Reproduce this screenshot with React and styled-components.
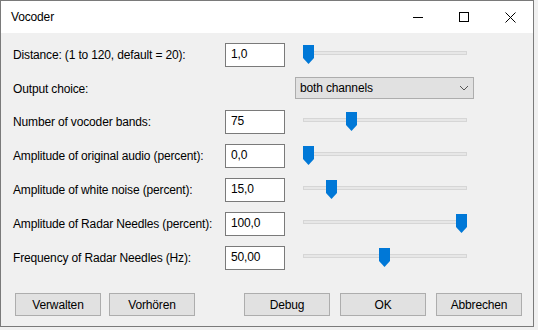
import React from "react";
import styled, { createGlobalStyle } from "styled-components";

const Global = createGlobalStyle`
  html, body { margin: 0; padding: 0; background: #f0f0f0; }
  body { font-family: "Liberation Sans", Arial, sans-serif; font-size: 12px; color: #000; letter-spacing: -0.15px; }
  * { box-sizing: border-box; }
`;

const Window = styled.div`
  width: 534px;
  height: 327px;
  border: 1px solid #7a7a7a;
  background: #f0f0f0;
  display: flex;
  flex-direction: column;
`;

const TitleBar = styled.div`
  height: 32px;
  background: #fff;
  display: flex;
  align-items: center;
  flex-shrink: 0;
`;

const Title = styled.div`
  flex: 1;
  padding-left: 10px;
  font-size: 12px;
`;

const CaptionButton = styled.div`
  width: 46px;
  height: 32px;
  display: flex;
  align-items: center;
  justify-content: center;
`;

const Content = styled.div`
  flex: 1;
  padding: 10px 11px 10px 12px;
  display: flex;
  flex-direction: column;
`;

const Grid = styled.div`
  display: grid;
  grid-template-columns: 202px 60px 179px;
  grid-template-rows: 24px 23px 24px 24px 24px 24px 24px;
  column-gap: 10px;
  row-gap: 10px;
`;

const Label = styled.div`
  align-self: center;
  white-space: nowrap;
`;

const Field = styled.input`
  width: 60px;
  height: 24px;
  border: 1px solid #7a7a7a;
  background: #fff;
  padding: 2px 5px 4px 5px;
  line-height: 16px;
  font: inherit;
  letter-spacing: inherit;
  color: #000;
  outline: none;
`;

const SliderBox = styled.div`
  position: relative;
  height: 24px;
`;

const Track = styled.div`
  position: absolute;
  left: 8px;
  right: 7px;
  top: 8px;
  height: 4px;
  background: #e7e7e7;
  border: 1px solid #d6d6d6;
`;

const Thumb = styled.svg`
  position: absolute;
  top: 2px;
  width: 11px;
  height: 19px;
  display: block;
`;

const Select = styled.div`
  grid-column: 3;
  align-self: start;
  height: 22px;
  background: #e1e1e1;
  border: 1px solid #adadad;
  display: flex;
  align-items: center;
  justify-content: space-between;
  padding: 0 4px 0 4px;
`;

const Buttons = styled.div`
  margin-top: 23px;
  display: flex;
  justify-content: space-between;
  padding-left: 2px;
`;

const Group = styled.div`
  display: flex;
  gap: ${(p) => p.$gap}px;
`;

const Button = styled.div`
  width: 86px;
  height: 23px;
  background: #e1e1e1;
  border: 1px solid #adadad;
  display: flex;
  align-items: center;
  justify-content: center;
`;

const Slider = ({ frac }) => (
  <SliderBox>
    <Track />
    <Thumb viewBox="0 0 11 19" style={{ left: 8 + Math.round(frac * 153) }}>
      <polygon points="0,0 11,0 11,13 5.5,19 0,13" fill="#0078d7" />
    </Thumb>
  </SliderBox>
);

const rows = [
  { label: "Distance: (1 to 120, default = 20):", value: "1,0", frac: 0 },
  { label: "Output choice:", select: "both channels" },
  { label: "Number of vocoder bands:", value: "75", frac: 43 / 153 },
  { label: "Amplitude of original audio (percent):", value: "0,0", frac: 0 },
  { label: "Amplitude of white noise (percent):", value: "15,0", frac: 0.15 },
  { label: "Amplitude of Radar Needles (percent):", value: "100,0", frac: 1 },
  { label: "Frequency of Radar Needles (Hz):", value: "50,00", frac: 0.497 },
];

export default function App() {
  return (
    <>
      <Global />
      <Window>
        <TitleBar>
          <Title>Vocoder</Title>
          <CaptionButton>
            <svg width="10" height="10" viewBox="0 0 10 10">
              <rect x="0" y="5" width="10" height="1" fill="#000" />
            </svg>
          </CaptionButton>
          <CaptionButton>
            <svg width="10" height="10" viewBox="0 0 10 10">
              <rect x="0.5" y="0.5" width="9" height="9" fill="none" stroke="#000" />
            </svg>
          </CaptionButton>
          <CaptionButton>
            <svg width="11" height="11" viewBox="0 0 11 11">
              <path d="M0.5 0.5 L10.5 10.5 M10.5 0.5 L0.5 10.5" stroke="#000" strokeWidth="1" />
            </svg>
          </CaptionButton>
        </TitleBar>
        <Content>
          <Grid>
            {rows.map((r) =>
              r.select ? (
                <React.Fragment key={r.label}>
                  <Label>{r.label}</Label>
                  <Select>
                    <span>{r.select}</span>
                    <svg width="10" height="6" viewBox="0 0 10 6">
                      <path d="M1 1 L5 5 L9 1" fill="none" stroke="#555" strokeWidth="1" />
                    </svg>
                  </Select>
                </React.Fragment>
              ) : (
                <React.Fragment key={r.label}>
                  <Label>{r.label}</Label>
                  <Field defaultValue={r.value} readOnly />
                  <Slider frac={r.frac} />
                </React.Fragment>
              )
            )}
          </Grid>
          <Buttons>
            <Group $gap={8}>
              <Button>Verwalten</Button>
              <Button>Vorhören</Button>
            </Group>
            <Group $gap={10}>
              <Button>Debug</Button>
              <Button>OK</Button>
              <Button>Abbrechen</Button>
            </Group>
          </Buttons>
        </Content>
      </Window>
    </>
  );
}
